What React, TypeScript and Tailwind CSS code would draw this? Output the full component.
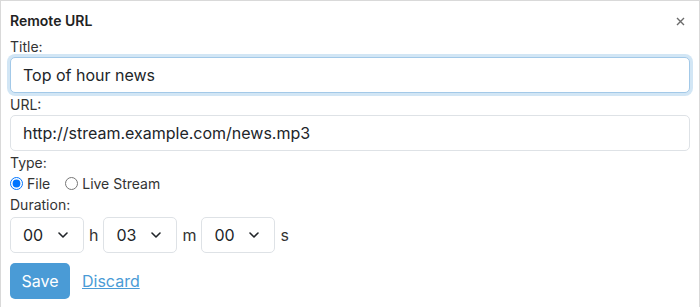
import { useState } from "react";

function Chevron() {
  return (
    <svg
      width="10"
      height="6"
      viewBox="0 0 10 6"
      fill="none"
      stroke="#212529"
      strokeWidth="1.6"
      strokeLinecap="round"
      strokeLinejoin="round"
      className="pointer-events-none absolute right-[16px] top-1/2 -translate-y-1/2"
    >
      <path d="M1 1l4 4 4-4" />
    </svg>
  );
}

function TimeSelect({ value, max }: { value: string; max: number }) {
  const opts = Array.from({ length: max }, (_, i) => String(i).padStart(2, "0"));
  return (
    <div className="relative w-[74px]">
      <select
        defaultValue={value}
        className="h-[36px] w-full appearance-none rounded-[5px] border border-[#dee2e6] bg-white pl-[12px] text-[16px] text-[#212529] outline-none"
      >
        {opts.map((o) => (
          <option key={o} value={o}>
            {o}
          </option>
        ))}
      </select>
      <Chevron />
    </div>
  );
}

export default function App() {
  const [type, setType] = useState("file");

  return (
    <div
      className="w-[700px] h-[307px] border-x border-t border-[#d9d9d9] bg-white px-[9px] pt-[10px] text-[14px] text-[#212529]"
      style={{ fontFamily: "Inter, 'Noto Sans', sans-serif" }}
    >
      <div className="flex h-[20px] items-center justify-between">
        <span className="font-semibold leading-[20px] text-[#222]">Remote URL</span>
        <button className="mr-[5px] flex h-[20px] w-[10px] items-center justify-center">
          <svg width="9" height="9" viewBox="0 0 9 9" stroke="#6b6b6b" strokeWidth="1.4">
            <path d="M1 1l7 7M8 1L1 8" />
          </svg>
        </button>
      </div>

      <label className="mt-[6px] block leading-[20px] text-[#333]">Title:</label>
      <input
        defaultValue="Top of hour news"
        className="block h-[36px] w-full rounded-[5px] border border-[#a3c9e8] bg-white px-[12px] text-[16px] text-[#212529] shadow-[0_0_0_3px_rgba(74,155,214,0.25)] outline-none"
      />

      <label className="mt-[2px] block leading-[20px] text-[#333]">URL:</label>
      <input
        defaultValue="http://stream.example.com/news.mp3"
        className="block h-[36px] w-full rounded-[5px] border border-[#dee2e6] bg-white px-[12px] text-[16px] text-[#212529] outline-none"
      />

      <div className="mt-[2px] leading-[20px] text-[#333]">Type:</div>
      <div className="flex h-[20px] items-center text-[14px] text-[#333]">
        <label className="flex items-center gap-[4px]">
          <input
            type="radio"
            name="type"
            checked={type === "file"}
            onChange={() => setType("file")}
            className="m-0 h-[13px] w-[13px]"
          />
          File
        </label>
        <label className="ml-[15px] flex items-center gap-[4px]">
          <input
            type="radio"
            name="type"
            checked={type === "live"}
            onChange={() => setType("live")}
            className="m-0 h-[13px] w-[13px]"
          />
          Live Stream
        </label>
      </div>

      <div className="mt-[2px] leading-[20px] text-[#333]">Duration:</div>
      <div className="mt-[2px] flex items-center gap-[5px] text-[16px] text-[#333]">
        <TimeSelect value="00" max={24} />
        <span>h</span>
        <TimeSelect value="03" max={60} />
        <span>m</span>
        <TimeSelect value="00" max={60} />
        <span>s</span>
      </div>

      <div className="mt-[10px] flex items-center gap-[12px]">
        <button className="h-[36px] w-[60px] rounded-[5px] bg-[#4a9bd6] text-[16px] text-white">
          Save
        </button>
        <a href="#" className="text-[16px] text-[#4a9bd6] underline">
          Discard
        </a>
      </div>
    </div>
  );
}
